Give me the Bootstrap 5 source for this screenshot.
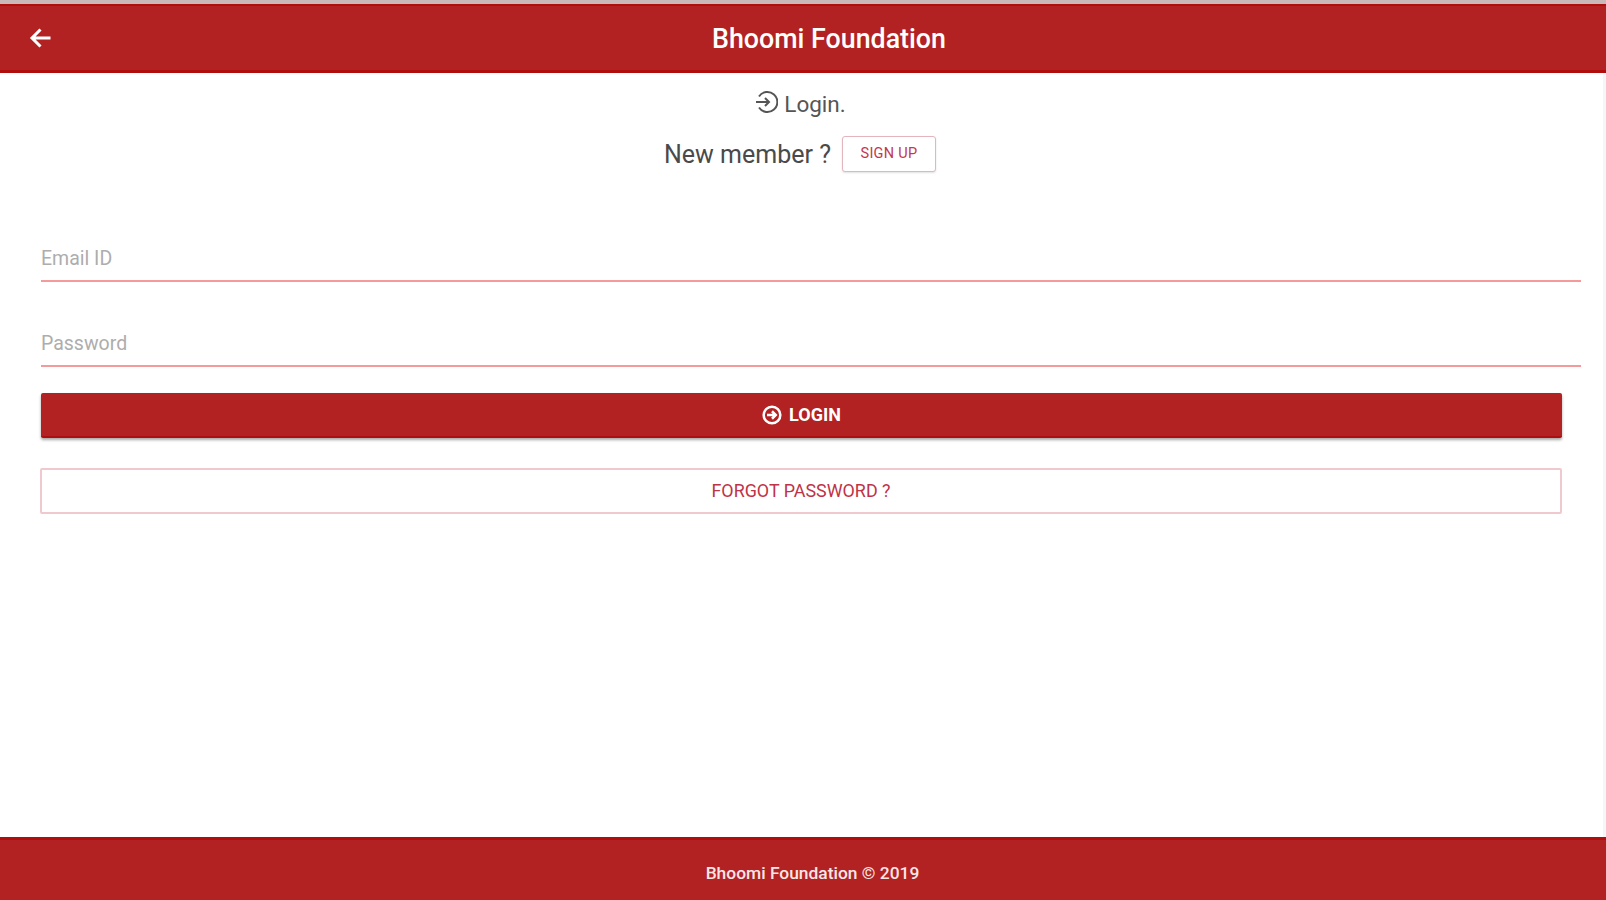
<!DOCTYPE html>
<html lang="en">
<head>
<meta charset="utf-8">
<title>Bhoomi Foundation</title>
<link rel="stylesheet" href="https://cdn.jsdelivr.net/npm/bootstrap@5.3.0/dist/css/bootstrap.min.css">
<style>
html,body{height:100%;overflow:hidden}
body{font-family:Roboto,"Liberation Sans",sans-serif;background:#fff;color:#444}
.app-shell{height:900px;padding-top:4px;background:linear-gradient(#c9b9b9 0,#c9b9b9 4px,#fff 4px);display:flex;flex-direction:column}
.app-top{height:69px;background:#b22222;border-top:2px solid #b00d0d;border-bottom:3px solid #b00d0d;padding-left:28px;color:#fff}
.app-top svg{display:block}
.app-title{flex:1;text-align:center;font-size:26.800px;font-weight:500;color:#fff;margin:2px 0 0 -1px;line-height:1}
.app-main{border-right:3px solid #f6f6f6}
.login-line{font-size:22.500px;color:#555;margin-top:16px;height:32px;padding-right:3px;gap:5px}
.login-line svg{margin-top:-6px;margin-right:1px}
.member-line{font-size:25px;color:#4a4a4a;height:38px;margin-top:14px;padding-right:3px;gap:11px}
.member-text{padding-top:2px}
.btn-signup{width:94px;height:36px;font-size:14.500px;letter-spacing:.3px;color:#c2384f;border:1px solid #e5b5bd;border-radius:3px;padding:0;background:#fff;box-shadow:0 1px 2px rgba(0,0,0,.12)}
.form-area{padding:0 22px 0 41px;flex:1}
.line-field{display:block;width:100%;border:0;border-bottom:2px solid #f59a9a;border-radius:0;outline:0;height:49px;padding:3px 0 0;font-size:19.500px;background:transparent}
.line-field::placeholder{color:#adadad}
.field-one{margin-top:60px}
.field-two{margin-top:36px}
.btn-wide{display:flex;align-items:center;justify-content:center;gap:7px;width:1521px;height:45px;border-radius:2px;padding:0}
.btn-fill{margin-top:26px;background:#b22222;border:0;border-bottom:2px solid #ad0f0f;color:#fff;font-size:18px;font-weight:700;box-shadow:0 2px 3px rgba(0,0,0,.35)}
.btn-line{margin-top:30px;margin-left:-1px;width:1522px;height:46px;background:#fff;border:2px solid #efc9cd;color:#bf3347;font-size:17.900px}
.app-foot{height:63px;background:#b22222;border-top:3px solid #b00d0d;color:#f7e6e6;font-size:17.400px;font-weight:500;padding-top:20px;text-align:center}
.foot-text{display:block;padding-left:19px}
</style>
</head>
<body>
<div class="app-shell">
  <header class="app-top d-flex align-items-center">
    <svg width="25" height="24" viewBox="0 0 24 24" fill="none" stroke="#fff" stroke-width="3"><path d="M22 12H4M12 3.500 3.500 12l8.500 8.500"/></svg>
    <h1 class="app-title">Bhoomi Foundation</h1>
  </header>
  <main class="app-main flex-grow-1 d-flex flex-column">
    <div class="login-line d-flex align-items-center justify-content-center">
      <svg width="24" height="24" viewBox="0 0 24 24" fill="none" stroke="#555" stroke-width="2"><path d="M5 6.500A10 10 0 1 1 5 17.500"/><path d="M2 12h13M11 8l4 4-4 4"/></svg>
      <span>Login.</span>
    </div>
    <div class="member-line d-flex align-items-center justify-content-center">
      <span class="member-text">New member ?</span>
      <button type="button" class="btn btn-signup">SIGN UP</button>
    </div>
    <form class="form-area">
      <input class="line-field field-one" type="text" placeholder="Email ID" aria-label="Email ID">
      <input class="line-field field-two" type="password" placeholder="Password" aria-label="Password">
      <button type="button" class="btn btn-wide btn-fill">
        <svg width="20" height="20" viewBox="0 0 24 24" fill="none" stroke="#fff" stroke-width="3"><circle cx="12" cy="12" r="10"/><path d="M6 12h10M12 7.500l4.500 4.500-4.500 4.500"/></svg>
        <span>LOGIN</span>
      </button>
      <button type="button" class="btn btn-wide btn-line">FORGOT PASSWORD ?</button>
    </form>
  </main>
  <footer class="app-foot"><span class="foot-text">Bhoomi Foundation © 2019</span></footer>
</div>
<script src="https://cdn.jsdelivr.net/npm/bootstrap@5.3.0/dist/js/bootstrap.bundle.min.js"></script>
</body>
</html>
